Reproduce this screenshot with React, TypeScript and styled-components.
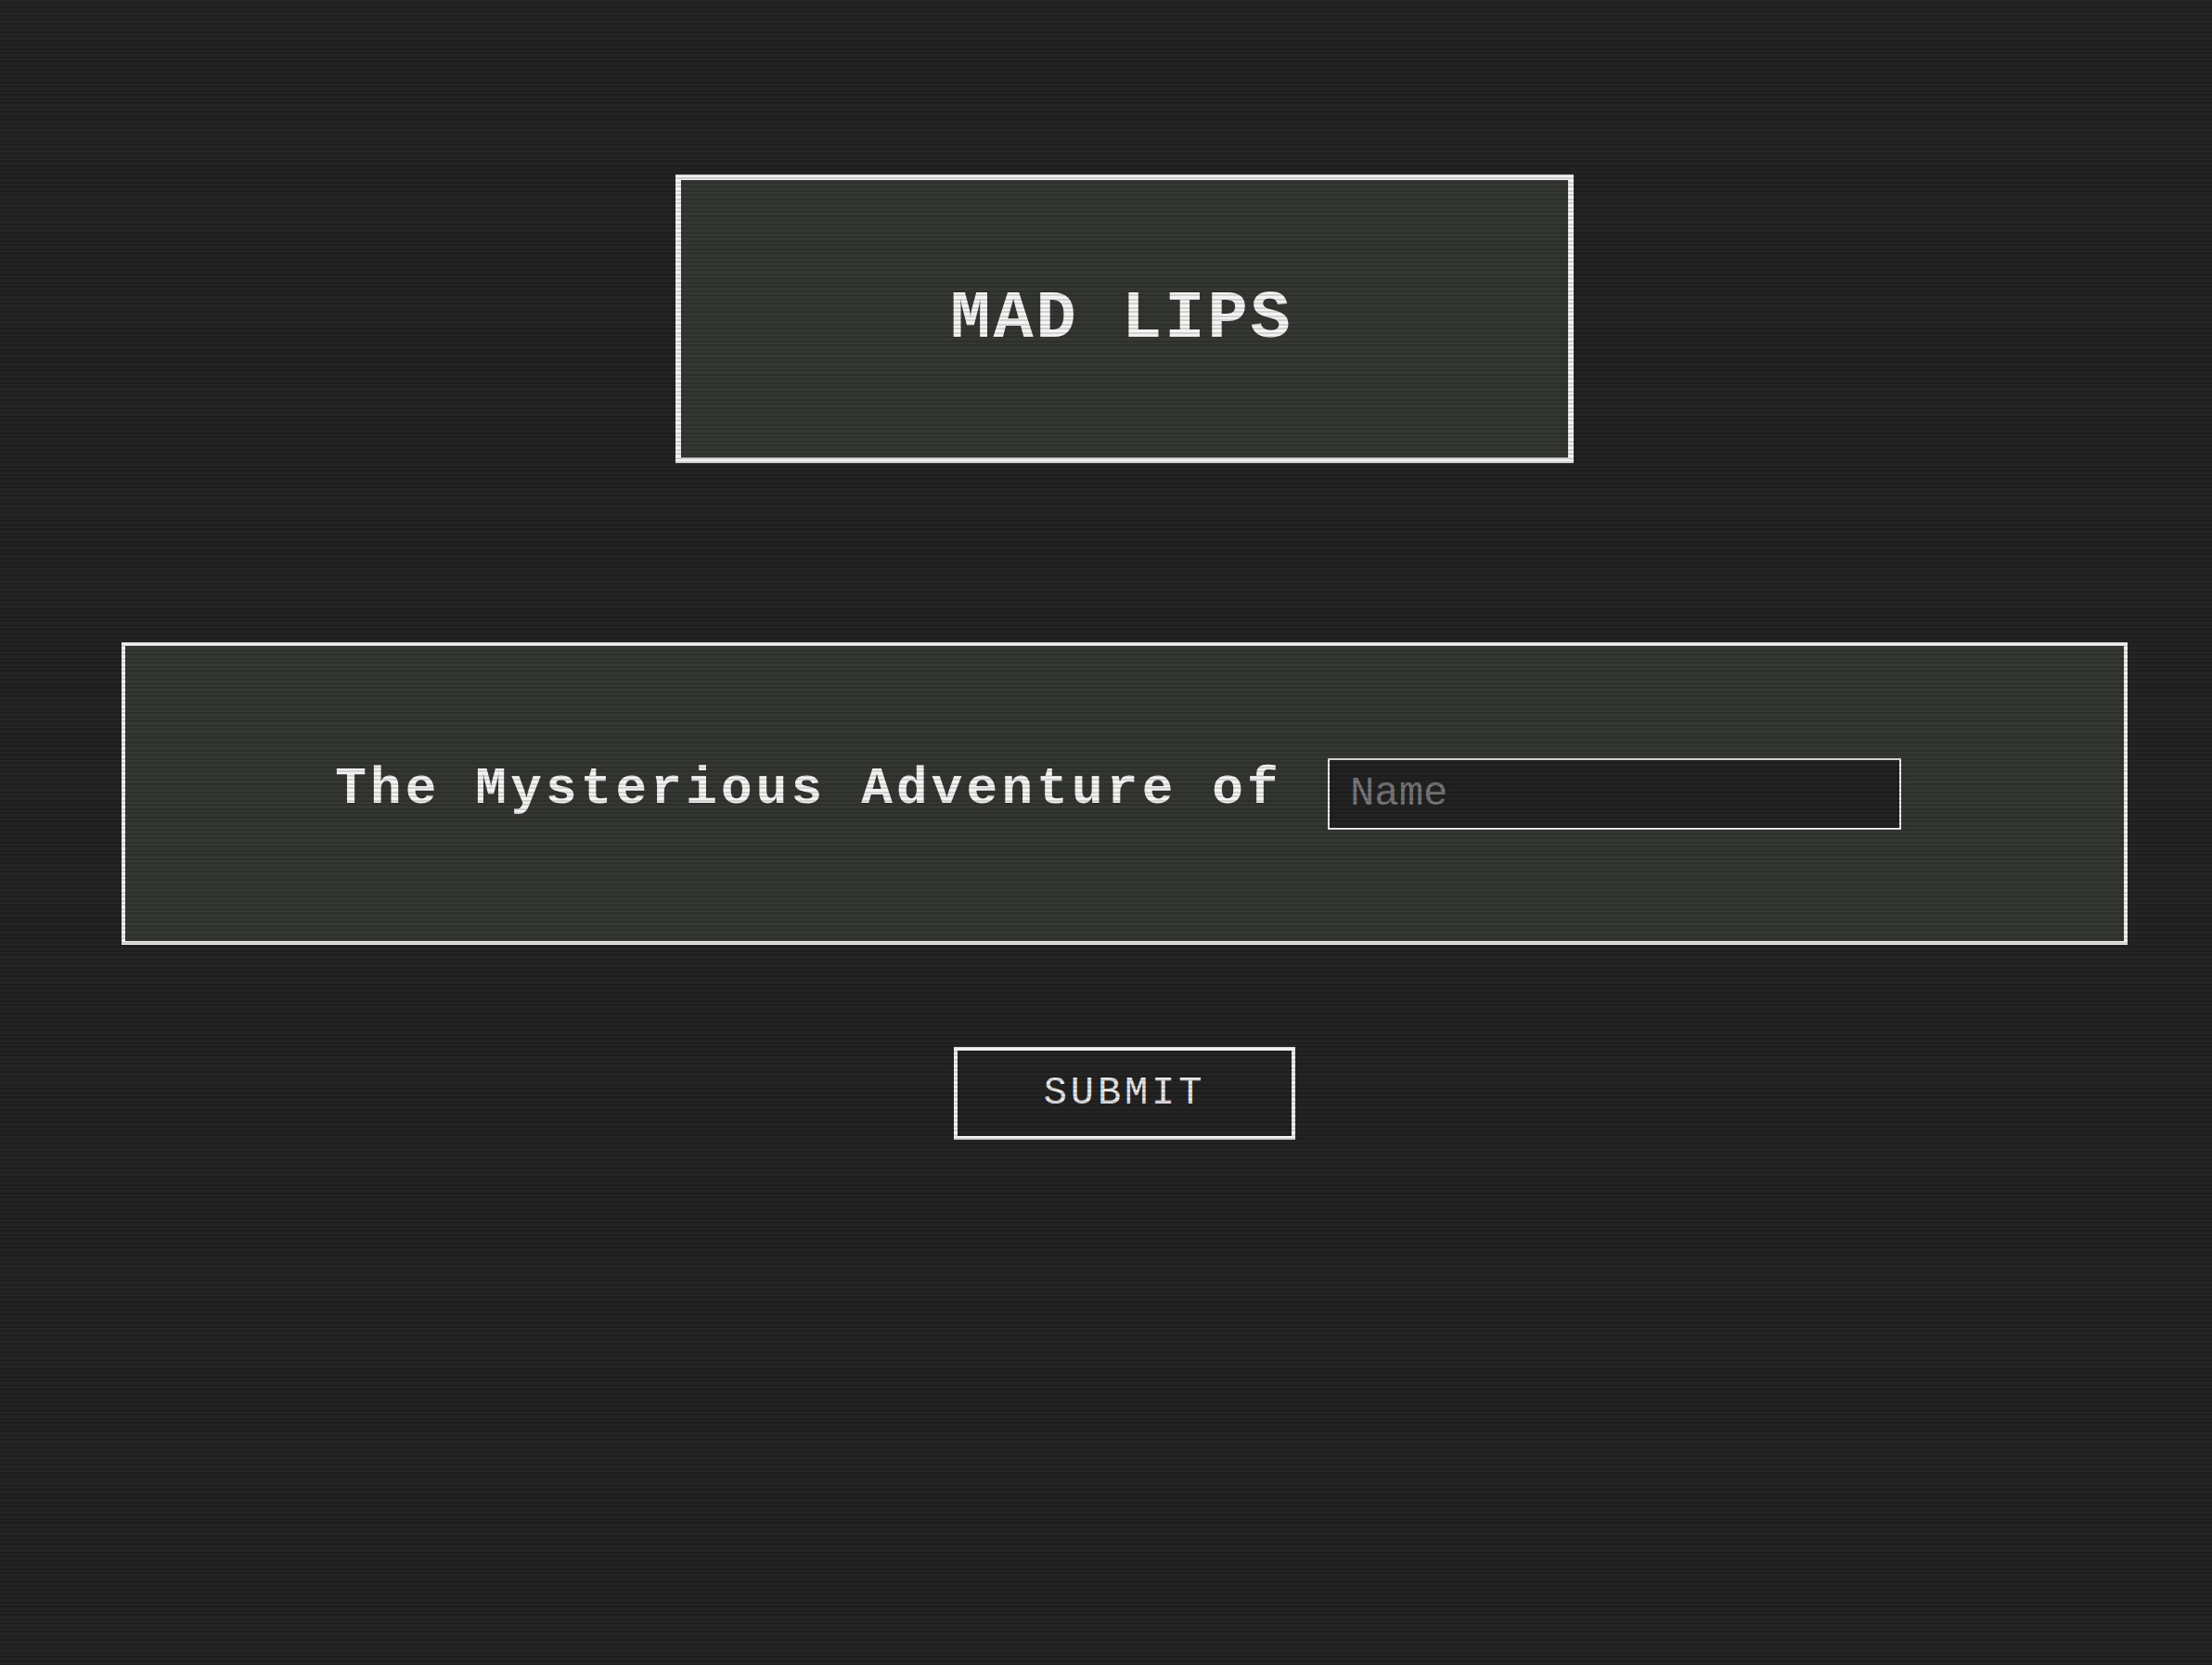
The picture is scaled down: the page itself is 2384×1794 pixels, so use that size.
import React, { useState } from 'react';
import styled, { createGlobalStyle } from 'styled-components';

const GlobalStyle = createGlobalStyle`
  html, body {
    margin: 0;
    padding: 0;
    min-height: 100%;
    background: #242424;
    font-family: "Liberation Mono", "Courier New", monospace;
  }

  /* crt scanlines over everything */
  body::after {
    content: '';
    position: fixed;
    inset: 0;
    pointer-events: none;
    background: repeating-linear-gradient(
      to bottom,
      rgba(0, 0, 0, 0) 0px,
      rgba(0, 0, 0, 0) 2.25px,
      rgba(0, 0, 0, 0.14) 2.25px,
      rgba(0, 0, 0, 0.14) 4.5px
    );
    z-index: 10;
  }
`;

const Page = styled.main`
  box-sizing: border-box;
  min-height: 100vh;
  padding: 188px 91px 0 131px;
  display: flex;
  flex-direction: column;
  align-items: center;
`;

const TitleBox = styled.header`
  box-sizing: border-box;
  width: 968px;
  height: 311px;
  padding-right: 6px;
  border: 6px solid #f2f2f2;
  background: #353733;
  display: flex;
  align-items: center;
  justify-content: center;
`;

const Title = styled.h1`
  margin: 0;
  font-size: 72px;
  font-weight: 700;
  letter-spacing: 3px;
  color: #f4f4f4;
`;

const StoryBox = styled.section`
  box-sizing: border-box;
  width: 100%;
  height: 326px;
  margin-top: 193px;
  padding-right: 14px;
  border: 4px solid #f2f2f2;
  background: #353733;
  display: flex;
  align-items: center;
  justify-content: center;
  gap: 49px;
`;

const StoryText = styled.span`
  font-size: 56px;
  font-weight: 700;
  letter-spacing: 4.2px;
  color: #f4f4f4;
  margin-top: -10px;
`;

const NameInput = styled.input`
  box-sizing: border-box;
  width: 618px;
  height: 77px;
  padding: 0 0 0 22px;
  border: 2px solid #f2f2f2;
  border-radius: 0;
  background: #222222;
  color: #eeeeee;
  font-family: "Liberation Mono", "Courier New", monospace;
  font-size: 44px;
  outline: none;

  &::placeholder {
    color: #777777;
  }
`;

const SubmitButton = styled.button`
  box-sizing: border-box;
  width: 368px;
  height: 100px;
  margin-top: 110px;
  border: 4px solid #f2f2f2;
  border-radius: 0;
  background: #242424;
  color: #e8e8e8;
  font-family: "Liberation Mono", "Courier New", monospace;
  font-size: 42px;
  letter-spacing: 3.9px;
  padding: 0;
  cursor: pointer;
`;

const App = () => {
  const [name, setName] = useState('');

  return (
    <>
      <GlobalStyle />
      <Page>
        <TitleBox>
          <Title>MAD LIPS</Title>
        </TitleBox>

        <StoryBox>
          <StoryText>The Mysterious Adventure of</StoryText>
          <NameInput
            placeholder="Name"
            value={name}
            onChange={(e) => setName(e.target.value)}
          />
        </StoryBox>

        <SubmitButton type="button">SUBMIT</SubmitButton>
      </Page>
    </>
  );
};

export default App;
